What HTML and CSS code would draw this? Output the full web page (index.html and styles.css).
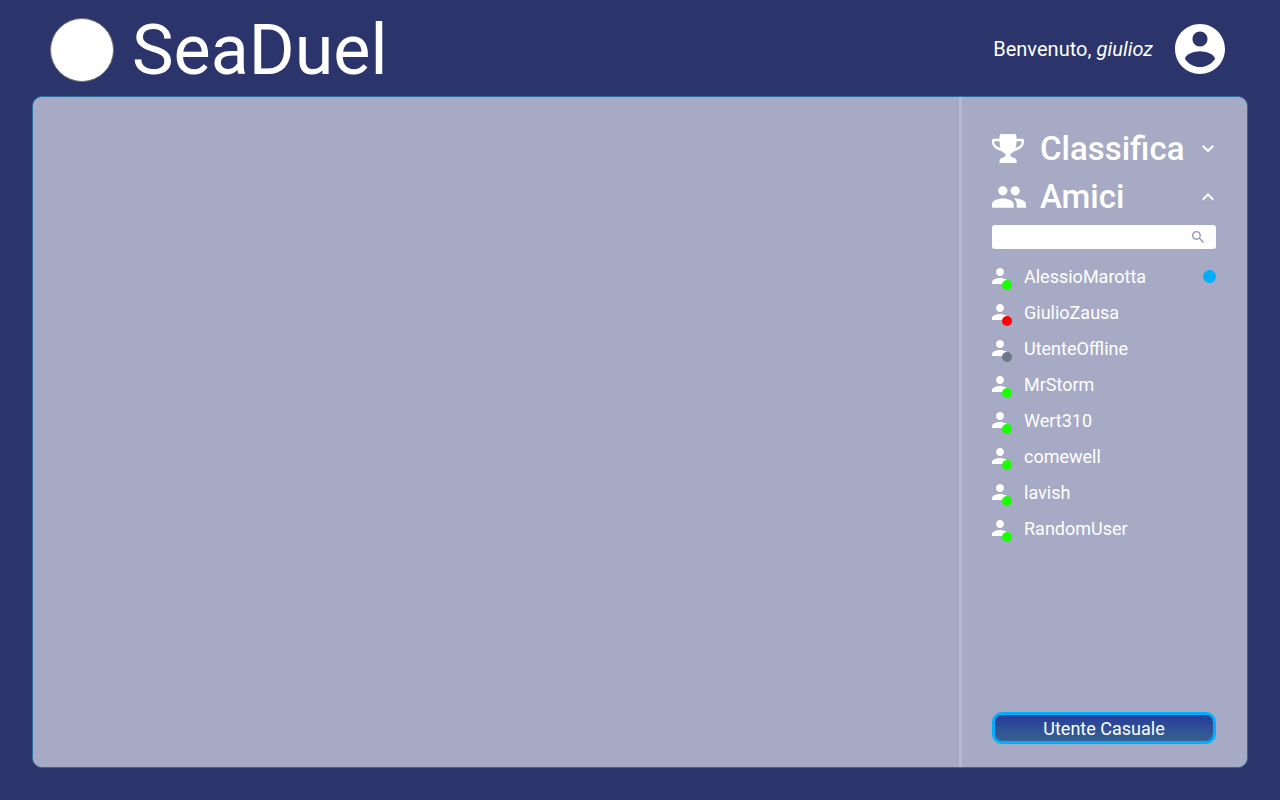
FILE: index.html
```html
<!DOCTYPE html>
<html lang="it">
<head>
<meta charset="utf-8">
<title>SeaDuel</title>
<link rel="stylesheet" href="styles.css">
</head>
<body>
<svg width="0" height="0" class="defs">
  <symbol id="person" viewBox="4 4 16 16"><path d="M12 12c2.210 0 4-1.790 4-4s-1.790-4-4-4-4 1.790-4 4 1.790 4 4 4zm0 2c-2.670 0-8 1.340-8 4v2h16v-2c0-2.660-5.330-4-8-4z"/></symbol>
</svg>
<header class="header">
  <div class="logo"></div>
  <h1 class="title">SeaDuel</h1>
  <p class="welcome">Benvenuto, <em>giulioz</em></p>
  <svg class="account" viewBox="2 2 20 20"><path d="M12 2C6.480 2 2 6.480 2 12s4.480 10 10 10 10-4.480 10-10S17.520 2 12 2zm0 3c1.660 0 3 1.340 3 3s-1.340 3-3 3-3-1.340-3-3 1.340-3 3-3zm0 14.200c-2.500 0-4.710-1.280-6-3.220.030-1.990 4-3.080 6-3.080 1.990 0 5.970 1.090 6 3.080-1.290 1.940-3.500 3.220-6 3.220z"/></svg>
</header>
<main class="panel">
  <section class="content"></section>
  <aside class="sidebar">
    <div class="section">
      <svg class="trophy" viewBox="0 0 32 29"><path fill-rule="evenodd" d="M9.500 0H22.500Q24.500 0 24.500 2V4.800H30.500Q32 4.800 32 6.300V8C32 12.500 27.500 16.200 22.500 16.900Q20.500 19 18.500 19.800V21.500Q19 23.500 21.500 23.800Q24.700 24.300 24.700 27.500V29H7.500V27.500Q7.500 24.300 10.500 23.800Q13 23.500 13.500 21.500V19.800Q11.500 19 9.500 16.900C4.500 16.200 0 12.500 0 8V6.300Q0 4.800 1.500 4.800H7.500V2Q7.500 0 9.500 0ZM2.300 7.200V8C2.300 10.500 4.800 13 8.500 14Q7.500 11 7.500 7.200ZM29.700 7.200H24.500Q24.500 11 23.500 14C27.200 13 29.700 10.500 29.700 8Z"/></svg>
      <h2>Classifica</h2>
      <svg class="chevron" viewBox="6 8.590 12 7.410"><path d="M16.590 8.590L12 13.170 7.410 8.590 6 10l6 6 6-6z"/></svg>
    </div>
    <div class="section">
      <svg class="people" viewBox="1 5 22 14"><path d="M16 11c1.660 0 2.990-1.340 2.990-3S17.660 5 16 5s-3 1.340-3 3 1.340 3 3 3zm-8 0c1.660 0 2.990-1.340 2.990-3S9.660 5 8 5 5 6.340 5 8s1.340 3 3 3zm0 2c-2.330 0-7 1.170-7 3.500V19h14v-2.500c0-2.330-4.670-3.500-7-3.500zm8 0c-.290 0-.620.020-.970.050 1.160.840 1.970 1.970 1.970 3.450V19h6v-2.500c0-2.330-4.670-3.500-7-3.500z"/></svg>
      <h2>Amici</h2>
      <svg class="chevron" viewBox="6 8 12 7.410"><path d="M12 8l-6 6 1.410 1.410L12 10.830l4.590 4.580L18 14z"/></svg>
    </div>
    <div class="search">
      <svg viewBox="3 3 17.490 17.490"><path d="M15.500 14h-.790l-.280-.270C15.410 12.590 16 11.110 16 9.500 16 5.910 13.090 3 9.500 3S3 5.910 3 9.500 5.910 16 9.500 16c1.610 0 3.090-.590 4.230-1.570l.270.280v.790l5 4.990L20.490 19l-4.990-5zm-6 0C7.010 14 5 11.990 5 9.500S7.010 5 9.500 5 14 7.010 14 9.500 11.990 14 9.500 14z"/></svg>
    </div>
    <ul class="friends">
      <li><span class="avatar"><svg><use href="#person"/></svg><i class="status"></i></span><span>AlessioMarotta</span><b class="notice"></b></li>
      <li><span class="avatar"><svg><use href="#person"/></svg><i class="status busy"></i></span><span>GiulioZausa</span></li>
      <li><span class="avatar"><svg><use href="#person"/></svg><i class="status offline"></i></span><span>UtenteOffline</span></li>
      <li><span class="avatar"><svg><use href="#person"/></svg><i class="status"></i></span><span>MrStorm</span></li>
      <li><span class="avatar"><svg><use href="#person"/></svg><i class="status"></i></span><span>Wert310</span></li>
      <li><span class="avatar"><svg><use href="#person"/></svg><i class="status"></i></span><span>comewell</span></li>
      <li><span class="avatar"><svg><use href="#person"/></svg><i class="status"></i></span><span>lavish</span></li>
      <li><span class="avatar"><svg><use href="#person"/></svg><i class="status"></i></span><span>RandomUser</span></li>
    </ul>
    <button class="random">Utente Casuale</button>
  </aside>
</main>
</body>
</html>
```

FILE: styles.css
```css
* { box-sizing: border-box; }
body {
  margin: 0;
  height: 800px;
  padding: 0 32px 32px;
  display: flex;
  flex-direction: column;
  overflow: hidden;
  background: #2c356b;
  color: #fff;
  font-family: Roboto, sans-serif;
}
.defs { position: absolute; }
svg { fill: currentColor; display: block; flex: none; }
.header {
  height: 96px;
  flex: none;
  display: flex;
  align-items: center;
  padding: 2px 23px 0 18px;
}
.logo {
  width: 64px;
  height: 64px;
  margin-top: 2px;
  border-radius: 50%;
  background: #fff;
  border: 1px solid #707070;
}
.title {
  margin: 1px auto 0 18px;
  font-size: 70px;
  line-height: 84px;
  font-weight: 400;
}
.welcome { margin: 0 22px 0 0; font-size: 20px; line-height: 24px; letter-spacing: 0.03px; }
.account { width: 50px; height: 50px; }
.panel {
  flex: 1;
  display: flex;
  border: 1px solid #2b6f9f;
  border-radius: 10px;
  background: #a7aac5;
}
.content { flex: 1; }
.sidebar {
  width: 288.5px;
  border-left: 3px solid #b8b9d0;
  padding: 28px 31px 23px 30.5px;
  display: flex;
  flex-direction: column;
}
.section { display: flex; align-items: center; height: 48px; }
.section h2 { margin: 0 auto 0 16px; font-size: 33px; line-height: 40px; font-weight: 500; }
.trophy { width: 32px; height: 29px; margin-bottom: 1px; }
.people { width: 34px; height: 22px; }
.people + h2 { margin-left: 14px; }
.chevron { width: 12px; height: 7.4px; margin-right: 2px; }
.search {
  height: 24px;
  margin-top: 4px;
  padding-right: 12px;
  border-radius: 3px;
  background: #fff;
  color: #9395b8;
  display: flex;
  align-items: center;
  justify-content: flex-end;
}
.search svg { width: 12px; height: 12px; }
.friends { list-style: none; margin: 10px 0 auto; padding: 0; }
.friends li { height: 36px; display: flex; align-items: center; gap: 16px; font-size: 18px; line-height: 24px; }
.avatar { position: relative; margin-bottom: 2px; }
.avatar svg { width: 16px; height: 16px; }
.status {
  position: absolute;
  left: 10px;
  top: 12px;
  width: 10px;
  height: 10px;
  border-radius: 50%;
  background: #1aff00;
}
.busy { background: #f00; }
.offline { background: #6c7a89; }
.notice { width: 13px; height: 13px; margin: 0 0 1px auto; border-radius: 50%; background: #00aeff; }
.random {
  height: 32px;
  padding: 1px 0 0;
  border: 3px solid #00aeff;
  border-radius: 10px;
  background: linear-gradient(#283c9b, #356291);
  color: #fff;
  font: 18px/25px Roboto, sans-serif;
}
```
